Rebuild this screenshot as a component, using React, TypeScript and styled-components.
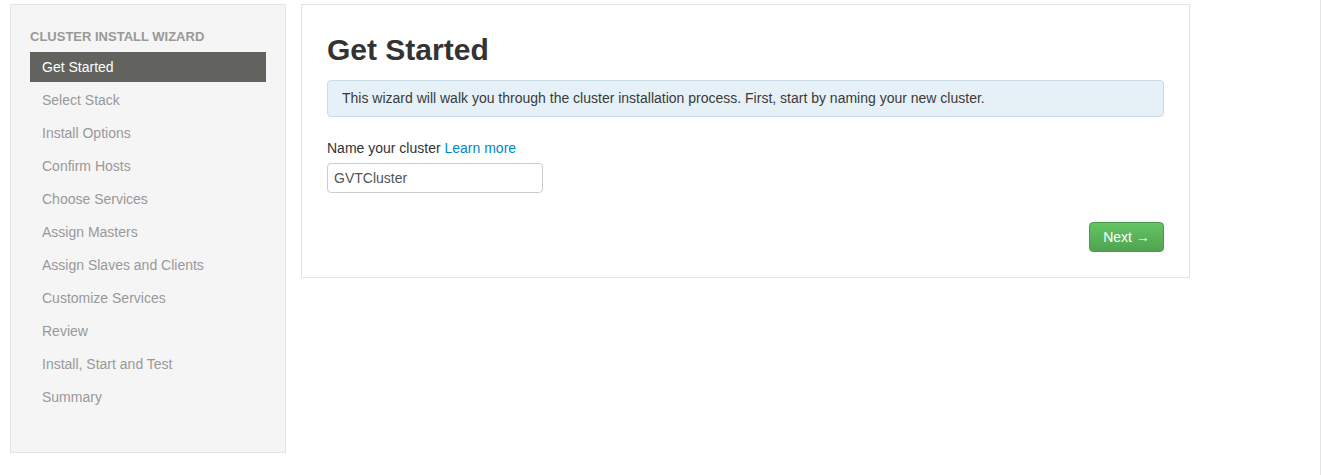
import styled, { createGlobalStyle } from "styled-components";

const GlobalStyle = createGlobalStyle`
  body {
    margin: 0;
    font-family: "Liberation Sans", Arial, sans-serif;
    font-size: 14px;
    color: #333;
    background: #fff;
  }
`;

const steps = [
  "Get Started",
  "Select Stack",
  "Install Options",
  "Confirm Hosts",
  "Choose Services",
  "Assign Masters",
  "Assign Slaves and Clients",
  "Customize Services",
  "Review",
  "Install, Start and Test",
  "Summary",
];

const App = () => {
  return (
    <Page>
      <GlobalStyle />
      <Layout>
        <Sidebar>
          <NavHeader>Cluster Install Wizard</NavHeader>
          <NavList>
            {steps.map((step, i) => (
              <NavItem key={step} $active={i === 0}>
                {step}
              </NavItem>
            ))}
          </NavList>
        </Sidebar>
        <Panel>
          <Title>Get Started</Title>
          <Alert>
            This wizard will walk you through the cluster installation process.
            First, start by naming your new cluster.
          </Alert>
          <Label>
            Name your cluster <LearnMore href="#">Learn more</LearnMore>
          </Label>
          <Input defaultValue="GVTCluster" />
          <Actions>
            <NextButton>Next &rarr;</NextButton>
          </Actions>
        </Panel>
      </Layout>
    </Page>
  );
};

const Page = styled.div`
  box-sizing: border-box;
  min-height: 100vh;
  border-right: 1px solid #e6e3e3;
  padding: 4px 10px 0;
`;

const Layout = styled.div`
  display: flex;
  align-items: flex-start;
  gap: 15px;
`;

const Sidebar = styled.div`
  box-sizing: border-box;
  width: 276px;
  height: 449px;
  background: #f5f5f5;
  border: 1px solid #e3e3e3;
  padding: 22px 19px 0;
`;

const NavHeader = styled.div`
  font-size: 13px;
  font-weight: bold;
  text-transform: uppercase;
  line-height: 20px;
  color: #999;
  margin-bottom: 5px;
`;

const NavList = styled.ul`
  list-style: none;
  margin: 0;
  padding: 0;
  display: flex;
  flex-direction: column;
  gap: 3px;
`;

const NavItem = styled.li<{ $active: boolean }>`
  height: 30px;
  line-height: 30px;
  padding-left: 12px;
  font-size: 14px;
  color: ${(p) => (p.$active ? "#fff" : "#999")};
  background: ${(p) => (p.$active ? "#62635f" : "transparent")};
`;

const Panel = styled.div`
  box-sizing: border-box;
  width: 889px;
  height: 274px;
  border: 1px solid #e3e3e3;
  padding: 25px 25px 0;
  display: flex;
  flex-direction: column;
`;

const Title = styled.h2`
  margin: 0 0 10px;
  font-size: 30px;
  line-height: 40px;
  font-weight: bold;
  color: #333;
`;

const Alert = styled.div`
  background: #e6f1f7;
  border: 1px solid #c9dce6;
  border-radius: 4px;
  padding: 8px 14px;
  line-height: 19px;
  color: #3a3a3a;
`;

const Label = styled.label`
  margin-top: 21px;
  line-height: 20px;
  margin-bottom: 5px;
  color: #333;
`;

const LearnMore = styled.a`
  color: #0088cc;
  text-decoration: none;
`;

const Input = styled.input`
  box-sizing: border-box;
  width: 216px;
  height: 30px;
  padding: 4px 6px;
  border: 1px solid #ccc;
  border-radius: 4px;
  font-family: inherit;
  font-size: 14px;
  color: #555;
  outline: none;
`;

const Actions = styled.div`
  display: flex;
  justify-content: flex-end;
  margin-top: 29px;
`;

const NextButton = styled.button`
  box-sizing: border-box;
  width: 75px;
  height: 30px;
  border: 1px solid #4a9a4a;
  border-radius: 4px;
  background: linear-gradient(#62c462, #51a351);
  color: #fff;
  font-family: inherit;
  font-size: 14px;
  cursor: pointer;
`;

export default App;
